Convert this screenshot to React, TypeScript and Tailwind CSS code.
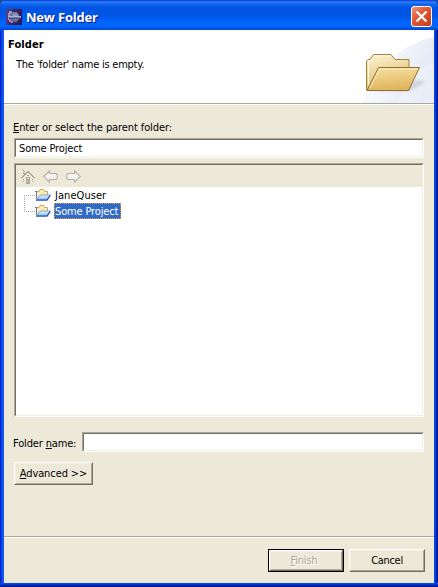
import type { ReactNode } from "react";

const sunken =
  "border-t border-l border-[#aca899] border-b-white border-r-white border-b border-r";
const sunkenInner =
  "border border-t-[#716f64] border-l-[#716f64] border-b-[#f1efe2] border-r-[#f1efe2]";

function Field({ text, className }: { text?: string; className: string }) {
  return (
    <div className={`${sunken} ${className}`}>
      <div className={`flex h-full items-center bg-white pt-[2px] pl-[3px] ${sunkenInner}`}>
        <span className="tracking-[-0.15px]">{text}</span>
      </div>
    </div>
  );
}

function Button({ children, className }: { children: ReactNode; className: string }) {
  return (
    <button
      className={`border border-t-white border-l-white border-b-[#716f64] border-r-[#716f64] ${className}`}
    >
      <span className="flex h-full items-center justify-center border border-t-[#f1efe2] border-l-[#f1efe2] border-b-[#aca899] border-r-[#aca899]">
        {children}
      </span>
    </button>
  );
}

function Key({ children }: { children: ReactNode }) {
  return <span className="underline decoration-1 underline-offset-[1px]">{children}</span>;
}

function AppIcon() {
  return (
    <svg width="16" height="16" shapeRendering="crispEdges">
      <defs>
        <linearGradient id="app" x2="1" y2="0.3">
          <stop stopColor="#5a4590" />
          <stop offset="0.5" stopColor="#35276a" />
          <stop offset="1" stopColor="#2c1a58" />
        </linearGradient>
        <radialGradient id="orb" cx="0.55" cy="0.4">
          <stop stopColor="#a3abc8" />
          <stop offset="1" stopColor="#626394" />
        </radialGradient>
      </defs>
      <rect width="16" height="16" fill="url(#app)" />
      <path d="M5 2h-2v2h-1v7h1v2h2v1h2v-1h-1v-2h-1v-7h1v-2z" fill="#a192c0" />
      <circle cx="8.5" cy="8" r="5" fill="url(#orb)" />
      <path d="M3 9.5h11" stroke="#4c4a80" />
      <path d="M2 7.5h13" stroke="#a4b2d8" />
      <path d="M2 8.5h13" stroke="#747fae" />
    </svg>
  );
}

function CloseIcon() {
  return (
    <svg width="21" height="21">
      <defs>
        <linearGradient id="red" x2="1" y2="1">
          <stop stopColor="#f09a82" />
          <stop offset="0.4" stopColor="#e05a38" />
          <stop offset="1" stopColor="#c5371a" />
        </linearGradient>
      </defs>
      <rect x="0.5" y="0.5" width="20" height="20" rx="2.5" fill="url(#red)" stroke="#fff" />
      <path d="M5.5 5.5l10 10M15.5 5.5l-10 10" stroke="#fff" strokeWidth="2.3" />
    </svg>
  );
}

function WizardBanner() {
  return (
    <svg width="96" height="73">
      <defs>
        <linearGradient id="sweep" x1="0.1" y1="0.2" x2="1" y2="0.6">
          <stop stopColor="#fff" />
          <stop offset="1" stopColor="#e0e7f6" />
        </linearGradient>
        <linearGradient id="back" x2="0.3" y2="1">
          <stop stopColor="#fdf4d4" />
          <stop offset="1" stopColor="#e0bd6c" />
        </linearGradient>
        <linearGradient id="front" x2="0.2" y2="1">
          <stop stopColor="#f7e2a6" />
          <stop offset="1" stopColor="#e0b55c" />
        </linearGradient>
        <filter id="soft">
          <feGaussianBlur stdDeviation="1.6" />
        </filter>
      </defs>
      <path d="M96 7C72 12 38 30 24 73H96Z" fill="url(#sweep)" />
      <path d="M96 32C80 40 66 54 60 73H96Z" fill="#fff" opacity="0.25" />
      <path d="M30 61L72 61 88 52 79 50 50 58Z" fill="#9996ac" opacity="0.35" filter="url(#soft)" />
      <path d="M28.5 60V31L30 29.5H32L35.5 24.5H53L57 29.5H71V60Z" fill="url(#back)" stroke="#a2843f" />
      <path d="M30.5 55V31.5H34L37 26H52" fill="none" stroke="#fff9e0" />
      <path d="M29 60.5L40.5 37.5H81.5L70.5 60.5Z" fill="url(#front)" stroke="#8f6f33" />
      <path d="M32 58L41.5 39H79" fill="none" stroke="#fbedbd" />
    </svg>
  );
}

function HomeIcon() {
  return (
    <svg width="14" height="15" shapeRendering="crispEdges" fill="#aca899">
      <path d="M1 0h1v1h-1zM2 1h1v1h-1zM3 2h1v1h-1zM2 3h1v2h-1zM3 4h1v1h-1z" />
      <path d="M6 2h2v1h1v1h1v1h1v1h1v1h1v1h1v1h-2v-1h-1v-1h-1v-1h-1v-1h-1v-1h-2v1h-1v1h-1v1h-1v1h-1v1h-2v-1h1v-1h1v-1h1v-1h1v-1h1v-1h1z" />
      <path d="M6 6h2v1h-2zM2 10h1v1h-1zM2 12h1v1h-1zM11 10h1v1h-1zM11 12h1v1h-1z" />
      <path fillRule="evenodd" d="M5 8h4v7h-4zM6 9v1h2v-1zM6 12v1h1v-1z" />
    </svg>
  );
}

function Arrow({ flip }: { flip?: boolean }) {
  return (
    <svg width="15" height="13" className={flip ? "-scale-x-100" : ""}>
      <path
        d="M0.8 6.5L6.5 0.8V3.5H13L14.2 4.5V8.5L13 9.5H6.5V12.2Z"
        fill="#f4f3ef"
        stroke="#b5b3a9"
        strokeWidth="1.1"
      />
    </svg>
  );
}

function FolderIcon() {
  return (
    <svg width="16" height="13">
      <defs>
        <linearGradient id="blue" x2="0" y2="1">
          <stop stopColor="#e2f4ff" />
          <stop offset="1" stopColor="#8cc6f0" />
        </linearGradient>
      </defs>
      <path d="M1.5 10V2.5H4L5 0.5H8.5L9.5 2.5H12.5V6L11 10Z" fill="#fdebb4" stroke="#cda75c" />
      <path d="M0 2.5H2M1.5 3V10" stroke="#5c78b8" fill="none" />
      <path d="M2 10.5L5.5 6H15.3L12 10.5Z" fill="url(#blue)" stroke="#7ea6da" />
      <path d="M1 11.2H12L15.3 6.3" fill="none" stroke="#2c54a8" strokeWidth="1.2" />
    </svg>
  );
}

function TreeRow({ label, selected, last }: { label: string; selected?: boolean; last?: boolean }) {
  return (
    <div className="flex h-4 items-center">
      <svg width="11" height="16" shapeRendering="crispEdges" stroke="#aca899" strokeDasharray="1 1">
        <path d={last ? "M0.5 0V8" : "M0.5 8V16"} />
        <path d="M0 8.5H11" />
      </svg>
      <FolderIcon />
      <span
        className={
          selected
            ? "ml-[3px] flex h-4 w-[67px] items-center border border-dotted border-[#e49a3d] bg-[#316ac5] pt-[2px] tracking-[-0.15px] text-white"
            : "ml-1 pt-[2px] tracking-[0.05px]"
        }
      >
        {label}
      </span>
    </div>
  );
}

export default function App() {
  return (
    <div className="bg-[#1d4a9c]">
      <div className="flex h-[587px] w-[438px] flex-col rounded-t-[6px] bg-[linear-gradient(90deg,#0019cf_0px,#0831d9_1px,#0a4be6_2px,#1560f0_3px,#0a4fe8_4px,#0a4fe8_434px,#0042e6_435px,#0030cf_436px,#001ea0_437px,#00138c_438px)] font-['DejaVu_Sans_Condensed','DejaVu_Sans',sans-serif] text-[11px] leading-[14px] whitespace-nowrap text-black [font-stretch:condensed]">
        <header className="flex h-[30px] shrink-0 items-center rounded-t-[6px] bg-[linear-gradient(180deg,#0831d9_0px,#2b84f8_2px,#1166ee_4px,#0054e3_8px,#0055e5_16px,#0264fb_22px,#0066ff_26px,#0051dc_29px,#003dd7_30px)] pt-[3px] pr-[6px] pl-[6px]">
          <AppIcon />
          <h1 className="ml-1 flex-1 font-['Open_Sans',sans-serif] text-[13px] font-bold tracking-[-0.2px] text-white [font-stretch:normal] [text-shadow:1px_1px_0_#0a1883]">
            New Folder
          </h1>
          <CloseIcon />
        </header>
        <main className="mx-1 flex h-[553px] flex-col bg-[#ece9d8]">
          <section className="flex h-[73px] shrink-0 justify-between bg-white">
            <div className="pt-[8px] pl-1">
              <h2 className="font-bold tracking-[0.1px]">Folder</h2>
              <p className="mt-[6px] ml-[8px] tracking-[-0.23px]">The 'folder' name is empty.</p>
            </div>
            <WizardBanner />
          </section>
          <hr className="h-[2px] shrink-0 border-t border-b border-t-[#aca899] border-b-white" />
          <section className="flex h-[431px] shrink-0 flex-col px-[10px] pt-[16px]">
            <label className="-ml-px h-[17px] tracking-[-0.1px]">
              <Key>E</Key>nter or select the parent folder:
            </label>
            <Field text="Some Project" className="h-5" />
            <div className={`mt-[5px] h-[254px] ${sunken}`}>
              <div className={`h-full bg-white ${sunkenInner}`}>
                <div className="flex h-[22px] items-center gap-[8px] bg-[#ece9d8] pl-[5px]">
                  <HomeIcon />
                  <Arrow />
                  <Arrow flip />
                </div>
                <div className="pl-2">
                  <TreeRow label="JaneQuser" />
                  <TreeRow label="Some Project" selected last />
                </div>
              </div>
            </div>
            <div className="mt-[15px] flex items-center">
              <label className="-ml-px w-[69px] pt-[3px] tracking-[-0.15px]">
                Folder <Key>n</Key>ame:
              </label>
              <Field className="h-5 w-[342px]" />
            </div>
            <Button className="mt-[10px] h-[23px] w-[79px]">
              <span className="tracking-[-0.1px]">
                <Key>A</Key>dvanced &gt;&gt;
              </span>
            </Button>
          </section>
          <hr className="h-[2px] shrink-0 border-t border-b border-t-[#aca899] border-b-white" />
          <footer className="flex justify-end gap-[5px] pt-[11px] pr-[9px]">
            <div className="h-[23px] w-[76px] border border-black">
              <Button className="h-full w-full text-[#aca899] [text-shadow:1px_1px_0_white]">
                <span className="-ml-1 tracking-[-0.15px]">
                  <Key>F</Key>inish
                </span>
              </Button>
            </div>
            <Button className="h-[23px] w-[76px]">
              <span className="tracking-[-0.3px]">Cancel</span>
            </Button>
          </footer>
        </main>
        <div className="h-1 shrink-0 bg-[linear-gradient(180deg,#0a4fe8,#0042e6_25%,#001ea0_75%,#00138c)]" />
      </div>
    </div>
  );
}
